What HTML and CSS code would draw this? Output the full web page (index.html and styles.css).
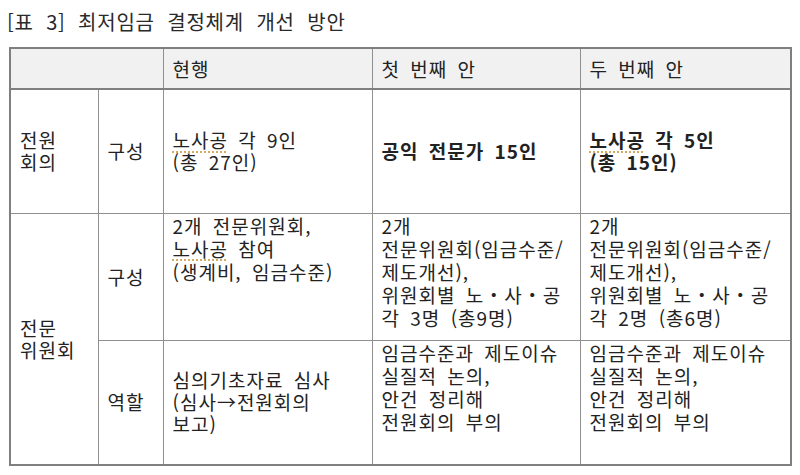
FILE: index.html
```html
<!DOCTYPE html>
<html lang="ko">
<head>
<meta charset="utf-8">
<link rel="stylesheet" href="styles.css">
</head>
<body>
<p class="title">[표 3] 최저임금 결정체계 개선 방안</p>
<table class="grid">
  <colgroup>
    <col class="c1"><col class="c2"><col class="c3"><col class="c4"><col class="c5">
  </colgroup>
  <thead>
    <tr class="head">
      <th colspan="2"></th>
      <th>현행</th>
      <th>첫 번째 안</th>
      <th>두 번째 안</th>
    </tr>
  </thead>
  <tbody>
    <tr class="r1">
      <td class="mid">전원<br>회의</td>
      <td class="mid">구성</td>
      <td class="mid"><span class="sp">노사공</span> 각 9인<br>(총 27인)</td>
      <td class="mid bold">공익 전문가 15인</td>
      <td class="mid bold"><span class="sp">노사공</span> 각 5인<br>(총 15인)</td>
    </tr>
    <tr class="r2">
      <td class="mid" rowspan="2">전문<br>위원회</td>
      <td class="mid">구성</td>
      <td class="top">2개 전문위원회,<br><span class="sp">노사공</span> 참여<br>(생계비, 임금수준)</td>
      <td class="top">2개<br>전문위원회(임금수준/<br>제도개선),<br>위원회별 노・사・공<br>각 3명 (총9명)</td>
      <td class="top">2개<br>전문위원회(임금수준/<br>제도개선),<br>위원회별 노・사・공<br>각 2명 (총6명)</td>
    </tr>
    <tr class="r3">
      <td class="mid">역할</td>
      <td class="mid">심의기초자료 심사<br>(심사→전원회의<br>보고)</td>
      <td class="top">임금수준과 제도이슈<br>실질적 논의,<br>안건 정리해<br>전원회의 부의</td>
      <td class="top">임금수준과 제도이슈<br>실질적 논의,<br>안건 정리해<br>전원회의 부의</td>
    </tr>
  </tbody>
</table>
</body>
</html>
```
FILE: styles.css
```css
html, body {
  margin: 0;
  padding: 0;
  background: #ffffff;
}
body {
  font-family: "Noto Sans CJK KR", "Noto Sans", sans-serif;
  color: #222222;
}
.title {
  margin: 0;
  padding: 8px 0 0 7px;
  font-size: 20px;
  line-height: 28px;
  word-spacing: 6px;
  letter-spacing: 0.8px;
  color: #2a2a2a;
}
.grid {
  margin: 11px 0 0 9px;
  width: 781px;
  table-layout: fixed;
  border-collapse: collapse;
  border: 2px solid #7f7f7f;
  font-size: 19px;
  line-height: 22px;
  letter-spacing: 1px;
  word-spacing: 4px;
}
.c1 { width: 88px; }
.c2 { width: 65px; }
.c3 { width: 209px; }
.c4 { width: 208px; }
.c5 { width: 211px; }
.grid th, .grid td {
  border: 1px solid #8f8f8f;
  padding: 0 0 0 9px;
  text-align: left;
  white-space: nowrap;
  overflow: hidden;
}
.grid th {
  font-weight: 400;
  background: #f1f1f1;
  vertical-align: middle;
  border-bottom: 2px solid #7f7f7f;
}
.head { height: 41px; }
.r1 { height: 124px; }
.r2 { height: 127px; }
.r3 { height: 125px; }
.mid { vertical-align: middle; }
.top { vertical-align: top; padding-top: 4px; line-height: 23px; }
.bold { font-weight: 700; }
.sp {
  text-decoration: underline dotted #d2a75a;
  text-underline-offset: 3px;
}
```
